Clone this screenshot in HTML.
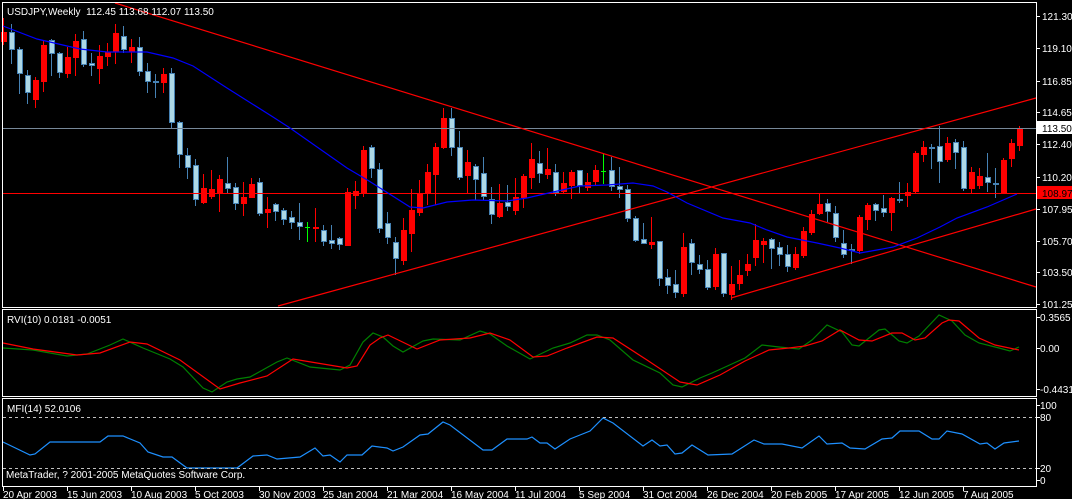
<!DOCTYPE html>
<html><head><meta charset="utf-8">
<style>
html,body{margin:0;padding:0;background:#000;}
body{width:1072px;height:499px;overflow:hidden;}
svg{display:block;}
text{font-family:"Liberation Sans",sans-serif;font-size:10px;fill:#fff;}
</style></head><body>
<svg id="s" width="1072" height="499" viewBox="0 0 1072 499" shape-rendering="crispEdges" xmlns="http://www.w3.org/2000/svg">
<rect width="1072" height="499" fill="#000"/>
<g id="candles"></g>
<line x1="3" y1="128.5" x2="1036" y2="128.5" stroke="#778899"/>
<line x1="3" y1="193.5" x2="1036" y2="193.5" stroke="#ff0000"/>
<g shape-rendering="auto" fill="none">
<polyline stroke="#ff0000" stroke-width="1.2" points="115,3 1036,287"/>
<polyline stroke="#ff0000" stroke-width="1.2" points="278,306 1036,98"/>
<polyline stroke="#ff0000" stroke-width="1.2" points="731,298 1036,209"/>
<polyline stroke="#0000ff" stroke-width="1.2" points="3,26 37,39 80,49 107,52 147,52 173,58 193,66 227,88 273,117 290,128 347,168 369,181 380,188 410,207 423,208 447,202 473,200 507,201 527,198 553,192 580,186 607,185 633,183 653,186 667,192 687,203 723,218 750,223 767,230 787,237 817,243 840,248 860,253 877,250 893,247 917,238 940,227 957,218 987,207 1017,194"/>
<polyline stroke="#008000" stroke-width="1.2" points="3,348 33,350 67,356 87,354 110,345 123,339 143,348 170,359 183,367 203,388 212,392 227,382 237,379 250,377 277,362 287,358 310,367 340,370 350,365 363,342 373,333 383,337 393,346 403,352 423,341 433,339 460,340 480,331 490,334 507,346 530,359 553,348 570,343 587,335 597,335 610,340 633,360 660,373 673,385 682,387 700,378 712,373 745,358 762,345 779,347 799,349 812,340 827,325 842,332 852,345 859,346 879,330 885,329 899,341 907,343 919,336 939,315 952,321 965,335 979,343 999,348 1010,351 1019,347"/>
<polyline stroke="#ff0000" stroke-width="1.2" points="3,343 33,349 77,355 100,353 130,342 147,344 180,360 220,389 240,383 267,376 293,359 317,363 347,368 357,366 370,345 380,338 388,335 417,349 440,340 470,338 490,333 510,340 533,357 547,356 567,348 597,337 613,338 647,360 680,382 697,385 720,375 745,361 769,350 789,348 805,346 822,341 840,330 859,340 872,341 892,333 902,333 915,340 925,338 942,323 949,320 959,321 979,338 995,345 1019,350"/>
<polyline stroke="#1e90ff" stroke-width="1.2" points="3,442 30,455 35,454 50,442 100,442 108,436 123,436 140,443 148,452 163,457 172,457 187,468 210,468 237,468 253,456 267,455 277,459 300,457 315,448 323,456 330,455 340,462 347,455 362,455 372,446 387,448 393,451 403,447 420,435 428,434 443,422 450,425 483,450 492,450 507,439 527,439 532,437 540,443 547,443 555,449 570,439 580,435 590,431 603,418 613,423 643,446 652,440 660,446 667,445 675,454 682,453 692,445 708,455 732,454 754,440 764,444 782,444 802,448 819,436 827,444 842,443 850,448 865,449 882,439 892,438 900,431 919,431 932,439 939,439 947,431 962,434 980,444 987,443 995,449 1004,443 1019,441"/>
</g>
<line x1="3" y1="417.5" x2="1036" y2="417.5" stroke="#c0c0c0" stroke-dasharray="3,3"/>
<line x1="3" y1="468.5" x2="1036" y2="468.5" stroke="#c0c0c0" stroke-dasharray="3,3"/>
<rect x="2.5" y="2.5" width="1034" height="305" fill="none" stroke="#fff"/>
<rect x="2.5" y="309.5" width="1034" height="87" fill="none" stroke="#fff"/>
<rect x="2.5" y="398.5" width="1034" height="88" fill="none" stroke="#fff"/>
<g id="ticks" stroke="#fff"></g>
<rect x="1037" y="121" width="35" height="13" fill="#fff"/>
<rect x="1037" y="186" width="35" height="13" fill="#ff0000"/>
<text x="1042" y="20">121.30</text>
<text x="1042" y="52">119.10</text>
<text x="1042" y="85">116.85</text>
<text x="1042" y="116">114.65</text>
<text x="1042" y="132" style="fill:#000">113.50</text>
<text x="1042" y="148">112.40</text>
<text x="1042" y="181">110.20</text>
<text x="1042" y="197" style="fill:#000">108.97</text>
<text x="1042" y="213">107.95</text>
<text x="1042" y="245">105.70</text>
<text x="1042" y="276">103.50</text>
<text x="1042" y="308">101.25</text>
<text x="1040" y="321">0.3565</text>
<text x="1040" y="352">0.00</text>
<text x="1040" y="393">-0.4431</text>
<text x="1040" y="409">100</text>
<text x="1040" y="421">80</text>
<text x="1040" y="472">20</text>
<text x="1040" y="484">0</text>
<text x="7" y="15">USDJPY,Weekly&#160; 112.45 113.68 112.07 113.50</text>
<text x="7" y="323">RVI(10) 0.0181 -0.0051</text>
<text x="7" y="412">MFI(14) 52.0106</text>
<text x="6" y="478">MetaTrader, ? 2001-2005 MetaQuotes Software Corp.</text>
<text x="3" y="498">20 Apr 2003</text>
<text x="67" y="498">15 Jun 2003</text>
<text x="131" y="498">10 Aug 2003</text>
<text x="195" y="498">5 Oct 2003</text>
<text x="259" y="498">30 Nov 2003</text>
<text x="323" y="498">25 Jan 2004</text>
<text x="387" y="498">21 Mar 2004</text>
<text x="451" y="498">16 May 2004</text>
<text x="515" y="498">11 Jul 2004</text>
<text x="579" y="498">5 Sep 2004</text>
<text x="643" y="498">31 Oct 2004</text>
<text x="707" y="498">26 Dec 2004</text>
<text x="771" y="498">20 Feb 2005</text>
<text x="835" y="498">17 Apr 2005</text>
<text x="899" y="498">12 Jun 2005</text>
<text x="963" y="498">7 Aug 2005</text>
</svg>
<script>
var D="r 32 41 18 44|b 32 49 24 63|b 49 73 47 93|b 75 92 70 103|r 80 99 77 107|r 45 81 40 91|b 40 53 39 75|b 53 72 52 77|r 57 73 47 77|r 41 57 34 75|b 39 64 31 66|b 63 65 53 75|r 56 68 45 83|r 52 56 43 65|r 33 51 24 63|b 36 49 26 52|r 47 51 39 62|b 47 71 37 75|b 71 81 63 92|b 81 82 74 97|r 74 82 68 92|b 73 122 68 128|b 122 154 121 167|b 155 167 148 178|b 165 199 159 205|r 188 202 174 203|r 189 196 170 198|r 179 193 175 211|b 183 188 157 193|b 187 203 183 209|r 197 203 182 215|r 184 197 178 197|b 182 213 178 215|r 209 212 197 227|b 204 211 203 220|b 210 219 208 224|b 217 222 211 228|b 222 226 203 239|g 227 227 222 241|r 227 228 208 241|b 230 241 225 245|b 240 243 225 248|b 238 244 237 249|r 192 245 188 245|r 191 195 181 208|r 150 193 146 196|b 147 168 145 177|b 169 228 163 232|b 223 237 212 243|b 242 258 237 274|r 230 260 218 264|r 210 233 189 251|r 194 212 180 215|r 172 192 164 204|r 147 174 143 204|r 118 147 108 148|b 118 147 108 155|b 147 177 131 179|r 162 175 150 193|b 166 179 164 199|b 173 196 157 199|b 199 214 187 223|r 203 216 184 217|b 202 206 185 210|r 197 210 178 214|r 176 197 174 207|r 159 177 143 188|b 163 173 151 182|r 169 174 148 178|b 172 192 164 195|r 183 191 172 193|r 172 185 170 198|b 170 185 170 192|r 182 187 173 190|r 170 181 165 185|g 171 171 154 183|b 170 186 157 190|b 186 189 167 197|b 189 218 185 221|b 218 240 216 241|b 239 243 223 243|r 242 244 217 248|b 241 278 241 285|b 277 285 269 293|b 284 292 270 297|r 247 293 233 296|b 243 262 239 274|b 264 269 255 273|b 269 287 260 289|r 254 286 248 289|b 253 293 253 296|r 284 294 266 299|r 275 283 260 289|r 264 270 254 275|r 240 257 224 265|r 241 244 238 262|b 239 248 238 268|b 247 254 242 265|b 254 266 245 271|r 254 267 247 269|r 231 255 227 257|r 214 232 210 234|r 204 213 194 214|b 203 211 199 221|b 213 237 206 241|b 243 254 230 257|b 249 250 244 263|r 217 250 215 253|r 205 219 203 229|b 204 210 203 220|b 208 212 195 216|r 198 212 197 230|b 199 200 182 202|r 192 195 183 206|r 153 191 151 192|r 147 154 141 161|b 147 148 144 168|b 146 161 126 182|r 143 159 137 161|b 142 152 139 168|b 147 188 141 190|r 172 188 167 193|r 176 185 168 188|b 177 182 153 191|b 183 184 168 197|r 160 192 158 193|r 143 158 139 166|r 128 145 126 150".split("|");
var g=document.getElementById("candles"),h="";
D.forEach(function(s,i){var p=s.split(" "),t=p[0],a=+p[1],b=+p[2],wt=+p[3],wb=+p[4],x=3+8*i;
if(wt<3)wt=3;
var wc=t=="r"?"#ff0000":t=="g"?"#00ff00":"#4682b4";
h+='<line x1="'+(x+.5)+'" y1="'+wt+'" x2="'+(x+.5)+'" y2="'+(wb+1)+'" stroke="'+wc+'"/>';
if(t=="g"){h+='<line x1="'+(x-2)+'" y1="'+(a+.5)+'" x2="'+(x+3)+'" y2="'+(a+.5)+'" stroke="#00ff00"/>';}
else if(t=="r"){h+='<rect x="'+(x-2)+'" y="'+a+'" width="6" height="'+Math.max(2,b-a+1)+'" fill="#ff0000"/>';}
else{h+='<rect x="'+(x-1.5)+'" y="'+(a+.5)+'" width="5" height="'+Math.max(1,b-a)+'" fill="#add8e6" stroke="#4682b4"/>';}
});
g.innerHTML=h;
var tk="",ys=[16,48,81,112,144,177,209,241,272,304,317,348,389,405,417,468,480];
ys.forEach(function(y){tk+='<line x1="1037" y1="'+(y+.5)+'" x2="1040" y2="'+(y+.5)+'"/>';});
for(var k=0;k<16;k++){var x=3+64*k;tk+='<line x1="'+(x+.5)+'" y1="487" x2="'+(x+.5)+'" y2="491"/>';}
document.getElementById("ticks").innerHTML=tk;
</script>
</body></html>
